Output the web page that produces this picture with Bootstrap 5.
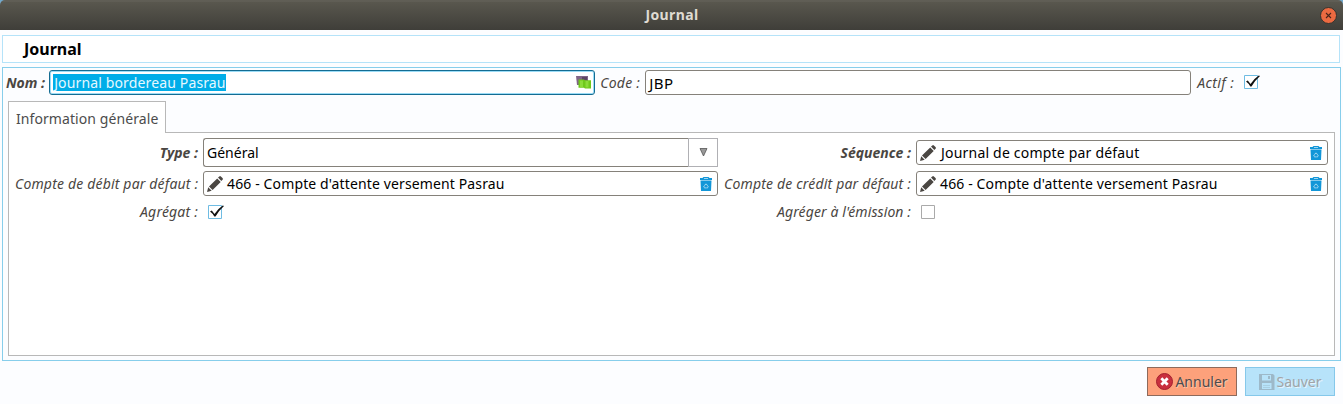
<!DOCTYPE html>
<html lang="fr">
<head>
<meta charset="utf-8">
<meta name="viewport" content="width=device-width, initial-scale=1">
<title>Journal</title>
<link rel="stylesheet" href="https://cdn.jsdelivr.net/npm/bootstrap@5.3.0/dist/css/bootstrap.min.css">
<style>
*{box-sizing:border-box}
body{font-family:"Noto Sans",sans-serif;font-size:14px;line-height:20px;color:#000;background:#fcfdff;height:404px;overflow:hidden}
.corners{background:linear-gradient(#6ea7cb,#fff)}
.titlebar{height:30px;background:linear-gradient(#5a584f 0,#66645c 1px,#59574e 2px,#3f3e39 30px);border-radius:5px 5px 0 0;color:#dfdbd2;padding-right:6px}
.close-btn{width:17px;height:17px}
.heading-box{margin:5px 3px 0 2px;height:28px;background:#fff;border:1px solid #b5e3f9;padding-left:21px;font-size:16px}
.frame{margin:4px 2px 0 2px;height:294px;border:1px solid #87ceeb;padding:2px 5px 4px 3px}
.lbl{font-style:italic;color:#4a4642;white-space:nowrap;text-align:right}
.t{white-space:nowrap;display:inline-block}
.field{height:25px;border:1px solid #85817a;border-radius:3px;background:#fff;padding:0 5px 0 3px;min-width:0}
.field.active{border-color:#146c92;box-shadow:inset 0 0 0 1px #9adcf7;padding-right:2px}
.sel{background:#00ade8;color:#e6f8ff;height:17px;line-height:17px}
.w-nom,.w-code{width:546px}
.code-l{width:50px;padding-right:5px}
.act-l{width:43px}
.chk-a{margin:0 0 2px 10px}
.j1{letter-spacing:.4px}
.s1{letter-spacing:.14px;padding-left:1px}
.code{letter-spacing:.25px}
.jbp{font-size:15px;letter-spacing:.5px}
.actif{letter-spacing:.4px}
.info{letter-spacing:.08px}
.jcd{letter-spacing:.2px;padding-left:1px}
.deb,.cred{letter-spacing:.175px}
.c466{letter-spacing:.13px}
.agg{letter-spacing:.2px}
.emi{letter-spacing:.1px}
.tab-head{width:158px;height:32px;border:1px solid #b8b8b8;border-bottom:0;background:#fff;color:#4c4c4c;margin:6px 0 -1px 2px;padding:2px 0 0 7px;position:relative}
.tab-panel{margin-left:2px;height:224px;border:1px solid #b8b8b8;background:#fff;padding:5px 6px 0 6px}
.form-grid{display:grid;grid-template-columns:183px 515px 188px 412px;grid-template-rows:29px 25px 24px;column-gap:5px;row-gap:4px;align-items:center;width:1313px}
.box-svg{margin:0 0 2px 5px}
.combo{height:29px;border:1px solid #85817a;border-right-color:#b8b8b8;border-radius:3px 0 0 3px;background:#fff;padding-left:3px}
.combo-arrow{width:30px;height:29px;margin-left:-1px;border:1px solid #b0b0b4;background:#fff}
.btn.act{width:90px;height:29px;border-radius:0;padding:0;font-size:14px;line-height:20px;gap:2px}
.btn-cancel{background:#fda17b;border:1px solid #8d6a5c;color:#4c4c4c;text-shadow:1px 1px 0 #ffc3a8}
.btn-save,.btn-save:disabled{background:#b7e3fa;border:1px solid #85c8ea;color:#a2a4a7;opacity:1;text-shadow:1px 1px 0 #e4f5fe}
.actions{margin-top:6px}
</style>
</head>
<body>
<svg width="0" height="0" class="position-absolute" aria-hidden="true">
<symbol id="pen" viewBox="0 0 16 16"><path fill="#4a4642" d="M0 16l1.200-4.700 3.500 3.500zM2 10.400L10.200 2.400l3.500 3.500-8.100 8.100zM11 1.600l1.300-1.200q.8-.7 1.600.1l1.600 1.600q.8.800 0 1.600L14.300 5z"/></symbol>
<symbol id="trash" viewBox="0 0 12 14"><path fill="#1296d8" d="M0 1h2.500L3.500 0h5L9.500 1H12v2H0zM.5 3.600h11L11 14H1z"/><path fill="#fff" d="M4 1h4v.6H4z"/><path fill="none" stroke="#d8f0fb" stroke-width=".9" stroke-dasharray="1.800 .6" d="M5.400 7.300h1.200l1.600 2.400-.7 1.200h-3l-.7-1.200z"/></symbol>
<symbol id="check" viewBox="0 0 17 17"><path fill="#fff" stroke="#6fbce3" d="M.5 2.500h13v13H.500z"/><path fill="#111" d="M2 8.500l1.800-1L6.500 11Q9.500 6 14.800 2.500l1.200.4Q10.800 7.500 7.500 13.500H6.300Q4.500 10.200 2 8.500z"/></symbol>
</svg>
<div class="corners"><header class="titlebar d-flex align-items-center">
<div class="flex-grow-1 text-center fw-bold ps-4"><span class="t j1">Journal</span></div>
<svg class="close-btn" viewBox="0 0 17 17"><circle cx="8.500" cy="8.500" r="8" fill="#ec6a41" stroke="#35332e"/><path d="M6 6l5 5m0-5l-5 5" stroke="#4a241a" stroke-width="1.100"/></svg>
</header></div>
<div class="heading-box d-flex align-items-center fw-bold"><span class="t">Journal</span></div>
<main class="frame">
<div class="d-flex align-items-center">
<label class="lbl fw-bold me-1"><span class="t">Nom :</span></label>
<div class="field active w-nom d-flex align-items-center justify-content-between"><span class="t sel s1">Journal bordereau Pasrau</span>
<svg width="16" height="15" viewBox="0 0 16 15"><path fill="#806587" d="M0 1h12v9H1z"/><path fill="#5c4665" d="M6 2h5v3H6z"/><path fill="#6fc91b" d="M2.500 4.500H8l.8.8H15v8.200H9l-1-.7H2.500z"/><path fill="#8bdc3a" d="M4 5.500h3v6.500H4zM9.500 6h3v6.500h-3z"/></svg></div>
<label class="lbl code-l"><span class="t code">Code :</span></label>
<div class="field w-code d-flex align-items-center"><span class="t jbp">JBP</span></div>
<label class="lbl act-l"><span class="t actif">Actif :</span></label>
<svg class="chk-a" width="17" height="17"><use href="#check"/></svg>
</div>
<div class="tab-head d-flex align-items-center"><span class="t info">Information générale</span></div>
<section class="tab-panel"><div class="form-grid">
<label class="lbl fw-bold"><span class="t">Type :</span></label>
<div class="d-flex"><div class="combo flex-grow-1 d-flex align-items-center"><span class="t">Général</span></div><div class="combo-arrow d-flex align-items-center justify-content-center"><svg width="9" height="9" viewBox="0 0 9 9"><path d="M1 .5h7L4.500 8z" fill="#999" stroke="#555" stroke-width=".8"/></svg></div></div>
<label class="lbl fw-bold"><span class="t">Séquence :</span></label>
<div class="field d-flex align-items-center"><svg class="me-1" width="16" height="16"><use href="#pen"/></svg><span class="t jcd">Journal de compte par défaut</span><svg class="ms-auto" width="12" height="14"><use href="#trash"/></svg></div>
<label class="lbl"><span class="t deb">Compte de débit par défaut :</span></label>
<div class="field d-flex align-items-center"><svg class="me-1" width="16" height="16"><use href="#pen"/></svg><span class="t c466">466 - Compte d'attente versement Pasrau</span><svg class="ms-auto" width="12" height="14"><use href="#trash"/></svg></div>
<label class="lbl"><span class="t cred">Compte de crédit par défaut :</span></label>
<div class="field d-flex align-items-center"><svg class="me-1" width="16" height="16"><use href="#pen"/></svg><span class="t c466">466 - Compte d'attente versement Pasrau</span><svg class="ms-auto" width="12" height="14"><use href="#trash"/></svg></div>
<label class="lbl"><span class="t agg">Agrégat :</span></label>
<svg class="box-svg" width="17" height="17"><use href="#check"/></svg>
<label class="lbl"><span class="t emi">Agréger à l'émission :</span></label>
<svg class="box-svg" width="17" height="17"><path d="M.5 2.500h13v13H.5z" fill="#fff" stroke="#aaa"/></svg>
</div></section>
</main>
<footer class="actions d-flex justify-content-end gap-2 pe-2">
<button class="btn act btn-cancel d-flex align-items-center justify-content-center"><svg width="17" height="17" viewBox="0 0 17 17"><circle cx="8.500" cy="8.500" r="8" fill="#c9303e" stroke="#a3202f"/><path d="M5.300 5.300l6.400 6.400m0-6.400l-6.400 6.400" stroke="#fff" stroke-width="2.800"/></svg><span class="t">Annuler</span></button>
<button class="btn act btn-save d-flex align-items-center justify-content-center" disabled><svg width="16" height="16" viewBox="0 0 16 16"><path fill="#9db9c9" fill-rule="evenodd" d="M0 0h14l1.500 1.500V16H0zM3 1v5.500h9V1zM3 9v6h9.500V9z"/><path fill="#9db9c9" d="M9 2h2v3H9z"/><path fill="#a9cfe2" d="M4 11h7v1H4zM4 13h7v1H4z"/></svg><span class="t">Sauver</span></button>
</footer>
<script src="https://cdn.jsdelivr.net/npm/bootstrap@5.3.0/dist/js/bootstrap.bundle.min.js"></script>
</body>
</html>
